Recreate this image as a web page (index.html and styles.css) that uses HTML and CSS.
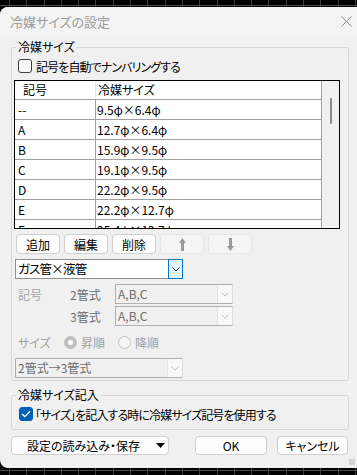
FILE: index.html
```html
<!DOCTYPE html>
<html lang="ja">
<head>
    <meta charset="UTF-8">
    <meta name="viewport" content="width=device-width, initial-scale=1.0">
    <title>冷媒サイズの設定</title>
    <link rel="stylesheet" href="styles.css">
</head>
<body>
    <div class="dialog">
        <div class="titlebar">
            <span class="title">冷媒サイズの設定</span>
            <svg class="close" width="11" height="11" viewBox="0 0 11 11"><path d="M0.5 0.5 L10.5 10.5 M10.5 0.5 L0.5 10.5" stroke="#8a8a8a" stroke-width="1" fill="none"/></svg>
        </div>

        <div class="content">
            <fieldset class="group group-size">
                <legend>冷媒サイズ</legend>

                <label class="check-row">
                    <span class="checkbox"></span>
                    記号を自動でナンバリングする
                </label>

                <div class="list">
                    <div class="list-body">
                        <div class="list-row list-head">
                            <span class="col-code">記号</span>
                            <span class="col-size">冷媒サイズ</span>
                        </div>
                        <div class="list-row"><span class="col-code">--</span><span class="col-size">9.5φ×6.4φ</span></div>
                        <div class="list-row"><span class="col-code">A</span><span class="col-size">12.7φ×6.4φ</span></div>
                        <div class="list-row"><span class="col-code">B</span><span class="col-size">15.9φ×9.5φ</span></div>
                        <div class="list-row"><span class="col-code">C</span><span class="col-size">19.1φ×9.5φ</span></div>
                        <div class="list-row"><span class="col-code">D</span><span class="col-size">22.2φ×9.5φ</span></div>
                        <div class="list-row"><span class="col-code">E</span><span class="col-size">22.2φ×12.7φ</span></div>
                        <div class="list-row"><span class="col-code">F</span><span class="col-size">25.4φ×12.7φ</span></div>
                    </div>
                    <div class="scrollbar"><span class="thumb"></span></div>
                </div>

                <div class="toolbar">
                    <button class="btn">追加</button>
                    <button class="btn">編集</button>
                    <button class="btn">削除</button>
                    <button class="btn disabled">
                        <svg width="7" height="13" viewBox="0 0 7 13"><path d="M3.5 0 L7 5 L5 5 L5 13 L2 13 L2 5 L0 5 Z" fill="#9a9a9a"/></svg>
                    </button>
                    <button class="btn disabled">
                        <svg width="7" height="13" viewBox="0 0 7 13"><path d="M3.5 13 L7 8 L5 8 L5 0 L2 0 L2 8 L0 8 Z" fill="#9a9a9a"/></svg>
                    </button>
                </div>

                <div class="combo combo-main">
                    <span class="combo-text">ガス管×液管</span>
                    <span class="combo-drop active">
                        <svg width="8" height="5" viewBox="0 0 8 5"><path d="M0.5 0.5 L4 4 L7.5 0.5" stroke="#333" fill="none"/></svg>
                    </span>
                </div>

                <div class="field-row">
                    <span class="field-label">記号</span>
                    <span class="field-sub">2管式</span>
                    <div class="combo disabled combo-small">
                        <span class="combo-text">A,B,C</span>
                        <span class="combo-drop">
                            <svg width="8" height="5" viewBox="0 0 8 5"><path d="M0.5 0.5 L4 4 L7.5 0.5" stroke="#c2c2c2" fill="none"/></svg>
                        </span>
                    </div>
                </div>
                <div class="field-row second">
                    <span class="field-label"></span>
                    <span class="field-sub">3管式</span>
                    <div class="combo disabled combo-small">
                        <span class="combo-text">A,B,C</span>
                        <span class="combo-drop">
                            <svg width="8" height="5" viewBox="0 0 8 5"><path d="M0.5 0.5 L4 4 L7.5 0.5" stroke="#c2c2c2" fill="none"/></svg>
                        </span>
                    </div>
                </div>

                <div class="radio-row">
                    <span class="radio-label">サイズ</span>
                    <span class="radio-item"><span class="radio checked"></span>昇順</span>
                    <span class="radio-item"><span class="radio"></span>降順</span>
                </div>

                <div class="combo disabled combo-order">
                    <span class="combo-text">2管式→3管式</span>
                    <span class="combo-drop">
                        <svg width="8" height="5" viewBox="0 0 8 5"><path d="M0.5 0.5 L4 4 L7.5 0.5" stroke="#c2c2c2" fill="none"/></svg>
                    </span>
                </div>
            </fieldset>

            <fieldset class="group group-note">
                <legend>冷媒サイズ記入</legend>
                <label class="check-row">
                    <span class="checkbox checked">
                        <svg width="10" height="8" viewBox="0 0 10 8"><path d="M1 4 L3.8 6.6 L9 1.2" stroke="#fff" stroke-width="1.3" fill="none"/></svg>
                    </span>
                    「サイズ」を記入する時に冷媒サイズ記号を使用する
                </label>
            </fieldset>

            <div class="footer">
                <button class="btn btn-menu">
                    <span>設定の読み込み・保存</span>
                    <svg width="9" height="5" viewBox="0 0 9 5"><path d="M0 0 L9 0 L4.5 5 Z" fill="#000"/></svg>
                </button>
                <button class="btn btn-ok">OK</button>
                <button class="btn btn-cancel">キャンセル</button>
            </div>
        </div>

        <span class="grip"></span>
    </div>
</body>
</html>
```

FILE: styles.css
```css
* {
    box-sizing: border-box;
}

body {
    margin: 0;
    width: 357px;
    height: 475px;
    overflow: hidden;
    font-family: "Noto Sans CJK JP", "Noto Sans", sans-serif;
    font-size: 12px;
    font-feature-settings: "palt";
    color: #000;
    background-color: #000;
    background-image:
        linear-gradient(#4a4a4a, #4a4a4a),
        linear-gradient(#4a4a4a, #4a4a4a),
        repeating-linear-gradient(90deg, transparent 0, transparent 9px, #3c3c3c 9px, #3c3c3c 10px, transparent 10px, transparent 17.3px);
    background-size: 100% 1px, 100% 1px, 100% 100%;
    background-position: 0 5px, 0 470px, 0 0;
    background-repeat: no-repeat, no-repeat, repeat;
}

.dialog {
    position: relative;
    margin-top: 7px;
    height: 461px;
    background-color: #f0f0f0;
    border-radius: 8px 0 0 8px;
    overflow: hidden;
}

.titlebar {
    height: 29px;
    display: flex;
    align-items: center;
    justify-content: space-between;
    padding: 0 5px 0 10px;
    background-color: #f3f3f3;
}

.title {
    font-size: 13px;
    color: #9a9a9a;
}

.content {
    padding: 0 8px 0 11px;
}

.group {
    margin: 4px 0 0;
    padding: 0 8px 2px 1px;
    border: 1px solid #d8d8d8;
    border-radius: 2px;
    min-width: 0;
}

.group legend {
    margin-left: 3px;
    padding: 0 2px;
    font-size: 12px;
    line-height: 14px;
}

.check-row {
    display: flex;
    align-items: center;
    gap: 4px;
    height: 20px;
    margin: 2px 0 0 5px;
    letter-spacing: -0.9px;
}

.checkbox {
    width: 14px;
    height: 14px;
    border: 1px solid #3c3c3c;
    border-radius: 3px;
    background-color: #fafafa;
    display: flex;
    align-items: center;
    justify-content: center;
}

.checkbox.checked {
    border-color: #005fb8;
    background-color: #005fb8;
}

/* list view */
.list {
    display: flex;
    height: 149px;
    margin: 4px 0 0 1px;
    border: 1px solid #000;
    background-color: #fff;
}

.list-body {
    flex: 1;
    overflow: hidden;
    border-right: 1px solid #a0a0a0;
}

.list-row {
    display: flex;
    height: 20px;
    border-bottom: 1px solid #a0a0a0;
    line-height: 19px;
}

.list-head {
    height: 19px;
    line-height: 18px;
}

.col-code {
    width: 81px;
    padding-left: 3px;
    border-right: 1px solid #a0a0a0;
}

.col-size {
    flex: 1;
    padding-left: 1px;
}

.list-head .col-code {
    padding-left: 8px;
    border-right-color: #e5e5e5;
}

.list-head .col-size {
    padding-left: 2px;
}

.scrollbar {
    width: 17px;
    padding-top: 17px;
    background-color: #f0f0f0;
}

.thumb {
    display: block;
    width: 2px;
    height: 26px;
    margin-left: 8px;
    border-radius: 1px;
    background-color: #8a8a8a;
}

/* buttons */
.btn {
    height: 20px;
    padding: 0;
    font: inherit;
    color: #000;
    border: 1px solid #d0d0d0;
    border-radius: 4px;
    background-color: #fdfdfd;
    display: flex;
    align-items: center;
    justify-content: center;
}

.btn.disabled {
    background-color: #f5f5f5;
    border-color: #e6e6e6;
}

.toolbar {
    display: flex;
    gap: 4px;
    margin: 5px 0 0 3px;
}

.toolbar .btn {
    width: 44px;
}

/* combo boxes */
.combo {
    display: flex;
    height: 20px;
    border: 1px solid #8f8f8f;
    background-color: #fff;
}

.combo-text {
    flex: 1;
    padding-left: 2px;
    line-height: 18px;
}

.combo-drop {
    width: 15px;
    display: flex;
    align-items: center;
    justify-content: center;
    background-color: #f8f8f8;
    border-left: 1px solid #e3e3e3;
}

.combo-drop.active {
    margin: -1px -1px -1px 0;
    width: 15px;
    border: 1px solid #0078d4;
    background-color: #e5f1fb;
}

.combo-main {
    width: 168px;
    margin: 5px 0 0 2px;
}

.combo-main .combo-text {
    font-size: 12.5px;
    letter-spacing: -0.8px;
}

.combo.disabled {
    border-color: #b0b0b0;
    border-right-color: #dcdcdc;
    background-color: #f0f0f0;
}

.combo.disabled .combo-text {
    color: #6d6d6d;
}

.combo-small {
    width: 118px;
}

.combo-order {
    width: 168px;
    margin: 6px 0 0 2px;
}

.field-row {
    display: flex;
    align-items: center;
    height: 20px;
    margin-top: 5px;
}

.field-row.second {
    margin-top: 2px;
}

.field-label {
    width: 57px;
    padding-left: 5px;
    color: #a6a6a6;
}

.field-sub {
    width: 45px;
    color: #6d6d6d;
}

/* radios */
.radio-row {
    display: flex;
    align-items: center;
    height: 20px;
    margin-top: 6px;
    color: #a0a0a0;
}

.radio-label {
    width: 51px;
    padding-left: 5px;
}

.radio-item {
    display: flex;
    align-items: center;
    gap: 4px;
    margin-right: 13px;
}

.radio {
    width: 13px;
    height: 13px;
    border-radius: 50%;
    border: 1px solid #c4c4c4;
    background-color: #f6f6f6;
}

.radio.checked {
    border: 4px solid #c0c0c0;
    background-color: #fff;
}

.group-note {
    margin-top: 7px;
    padding-bottom: 5px;
}

.group-note .check-row {
    margin-left: 6px;
    gap: 2px;
}

/* footer */
.footer {
    display: flex;
    margin-top: 6px;
}

.footer .btn {
    height: 19px;
}

.btn-menu {
    width: 158px;
    justify-content: space-between;
    padding: 0 3px 0 15px;
}

.btn-ok {
    width: 72px;
    margin-left: 26px;
}

.btn-cancel {
    width: 71px;
    margin-left: 10px;
}

.grip {
    position: absolute;
    right: 2px;
    bottom: 3px;
    width: 6px;
    height: 6px;
    background-image: radial-gradient(#b5b5b5 0.6px, transparent 0.8px);
    background-size: 2px 2px;
}
```
